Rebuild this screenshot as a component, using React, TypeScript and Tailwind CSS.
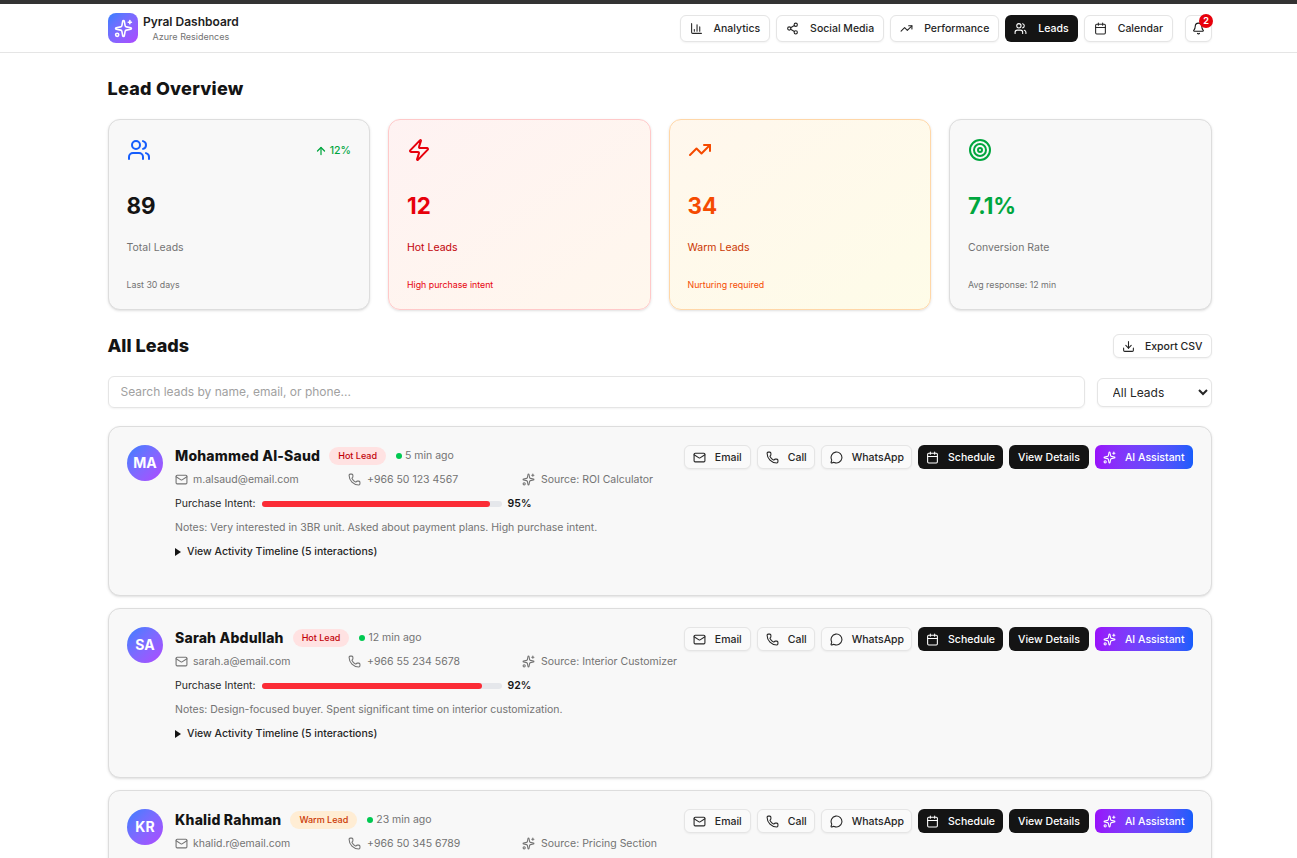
import { ArrowUp, Bell, Calendar, ChartColumn, Download, Mail, MessageCircle, Phone, Share2, Sparkles, Target, TrendingUp, Users, Zap } from 'lucide-react';

const navItems = [
    { label: 'Analytics', icon: ChartColumn },
    { label: 'Social Media', icon: Share2 },
    { label: 'Performance', icon: TrendingUp },
    { label: 'Leads', icon: Users, active: true },
    { label: 'Calendar', icon: Calendar },
];

const leads = [
    {
        initials: 'MA',
        name: 'Mohammed Al-Saud',
        badge: 'Hot Lead',
        hot: true,
        time: '5 min ago',
        email: 'm.alsaud@email.com',
        phone: '+966 50 123 4567',
        source: 'ROI Calculator',
        intent: 95,
        notes: 'Very interested in 3BR unit. Asked about payment plans. High purchase intent.',
    },
    {
        initials: 'SA',
        name: 'Sarah Abdullah',
        badge: 'Hot Lead',
        hot: true,
        time: '12 min ago',
        email: 'sarah.a@email.com',
        phone: '+966 55 234 5678',
        source: 'Interior Customizer',
        intent: 92,
        notes: 'Design-focused buyer. Spent significant time on interior customization.',
    },
    {
        initials: 'KR',
        name: 'Khalid Rahman',
        badge: 'Warm Lead',
        hot: false,
        time: '23 min ago',
        email: 'khalid.r@email.com',
        phone: '+966 50 345 6789',
        source: 'Pricing Section',
        intent: 78,
        notes: 'Comparing options. Requested pricing details for 2BR units.',
    },
];

const headingFont = 'font-["Inter",sans-serif] font-extrabold';

function LeadCard({ lead }: { lead: (typeof leads)[number] }) {
    return (
        <div className="h-[170px] shrink-0 rounded-xl border border-[#dddddd] bg-[#f8f8f8] pt-[18px] pr-[18px] pl-[18.5px] shadow-sm">
            <div className="flex justify-between">
                <div className="flex gap-3">
                    <div className="flex size-9 shrink-0 items-center justify-center rounded-full bg-gradient-to-br from-blue-500 to-purple-500 text-sm font-bold text-white">
                        {lead.initials}
                    </div>
                    <div className="whitespace-nowrap">
                        <div className="mt-px flex h-5 items-center">
                            <span className={`pb-[2px] text-[14px] tracking-[0.2px] text-[#141414] ${headingFont}`}>{lead.name}</span>
                            <span className={`ml-[9px] rounded-full px-[9px] py-[3px] text-[9px] leading-3 font-medium ${lead.hot ? 'bg-red-100 text-red-700' : 'bg-orange-100 text-orange-700'}`}>
                                {lead.badge}
                            </span>
                            <span className="ml-[10px] size-1.5 rounded-full bg-green-500" />
                            <span className="ml-[3px] text-[10.5px] text-neutral-500">{lead.time}</span>
                        </div>
                        <div className="mt-1 flex h-[19px] items-center text-[10.5px] text-neutral-500">
                            <div className="flex w-[173px] items-center gap-[5px]">
                                <Mail size={13} />
                                {lead.email}
                            </div>
                            <div className="flex w-[174px] items-center gap-[6px]">
                                <Phone size={13} />
                                {lead.phone}
                            </div>
                            <div className="flex items-center gap-[6px]">
                                <Sparkles size={13} />
                                Source: {lead.source}
                            </div>
                        </div>
                        <div className="mt-[5px] flex h-[19px] items-center text-[10.5px]">
                            <span className="text-neutral-800">Purchase Intent:</span>
                            <div className="ml-[6px] h-1.5 w-[240px] rounded-full bg-gray-200">
                                <div className="h-full rounded-full bg-[#fb2c36]" style={{ width: `${lead.intent}%` }} />
                            </div>
                            <span className="ml-[6px] font-semibold text-[#141414]">{lead.intent}%</span>
                        </div>
                        <div className="mt-[5px] flex h-[19px] items-center text-[10.5px] text-neutral-500">Notes: {lead.notes}</div>
                        <div className="mt-[5px] flex h-[19px] items-center text-[10.5px] font-medium text-neutral-800">
                            <span className="mr-[6px] size-0 border-y-4 border-l-[6px] border-y-transparent border-l-[#141414]" />
                            View Activity Timeline (5 interactions)
                        </div>
                    </div>
                </div>
                <div className="flex h-6 shrink-0 gap-[6px] text-[10.5px] leading-4 font-medium whitespace-nowrap">
                    <button className="flex items-center gap-[9px] rounded-md border border-neutral-200 bg-[#fafafa] pt-px pr-2 pl-2 text-neutral-800 shadow-xs">
                        <Mail size={13} />
                        Email
                    </button>
                    <button className="flex items-center gap-[9px] rounded-md border border-neutral-200 bg-[#fafafa] pt-px pr-[7px] pl-2 text-neutral-800 shadow-xs">
                        <Phone size={13} />
                        Call
                    </button>
                    <button className="flex items-center gap-[9px] rounded-md border border-neutral-200 bg-[#fafafa] pt-px pr-[7px] pl-2 text-neutral-800 shadow-xs">
                        <MessageCircle size={13} />
                        WhatsApp
                    </button>
                    <button className="flex items-center gap-[9px] rounded-md bg-[#141414] pt-px pr-2 pl-2 text-white">
                        <Calendar size={13} />
                        Schedule
                    </button>
                    <button className="flex items-center rounded-md bg-[#141414] px-[9px] pt-px text-white">View Details</button>
                    <button className="flex items-center gap-[9px] rounded-md bg-gradient-to-r from-purple-600 to-blue-600 pt-px pr-2 pl-2 text-white">
                        <Sparkles size={13} />
                        AI Assistant
                    </button>
                </div>
            </div>
        </div>
    );
}

export default function App() {
    return (
        <div className="h-screen overflow-hidden bg-white font-['Inter',sans-serif] text-[#141414]">
            <div className="h-1 bg-[#333333]" />
            <header className="h-[49px] border-b border-neutral-200 pr-[85px] pl-[108px]">
                <div className="flex h-full items-center justify-between">
                    <div className="flex items-center gap-[5px]">
                        <div className="flex size-[30px] items-center justify-center rounded-lg bg-gradient-to-br from-blue-500 to-purple-500 text-white">
                            <Sparkles size={19} />
                        </div>
                        <div className="text-center">
                            <div className="text-xs leading-4 font-semibold text-[#222222]">Pyral Dashboard</div>
                            <div className="mt-px text-[9px] leading-3 text-neutral-500">Azure Residences</div>
                        </div>
                    </div>
                    <div className="flex items-center">
                        <nav className="flex gap-[6px]">
                            {navItems.map((item) => (
                                <button
                                    key={item.label}
                                    className={`flex h-[27px] items-center gap-[11px] rounded-md px-[9px] pt-px text-[10.5px] leading-4 font-medium ${item.active ? 'bg-[#141414] text-white' : 'border border-neutral-200 bg-white text-neutral-800 shadow-xs'}`}
                                >
                                    <item.icon size={13} />
                                    {item.label}
                                </button>
                            ))}
                        </nav>
                        <button className="relative ml-3 flex h-[27px] w-[27px] items-center justify-center rounded-md border border-neutral-200 bg-white shadow-xs">
                            <Bell size={13} />
                            <span className="absolute -top-[2px] -right-[2px] flex size-[14px] items-center justify-center rounded-full bg-red-600 text-[9px] font-bold text-white">2</span>
                        </button>
                    </div>
                </div>
            </header>
            <main className="pr-[85.5px] pl-[107.5px]">
                <h1 className={`mt-[24px] text-lg leading-[24px] tracking-[0.25px] ${headingFont}`}>Lead Overview</h1>
                <div className="mt-[18px] grid grid-cols-4 gap-[18px]">
                    <div className="h-[191px] rounded-xl border border-[#dddddd] bg-[#f8f8f8] px-[18px] pt-[18px] shadow-sm">
                        <div className="flex items-center justify-between">
                            <Users size={24} className="text-blue-600" />
                            <span className="flex items-center gap-[3px] pt-px text-[10.5px] leading-4 font-medium text-green-600">
                                <ArrowUp size={12} strokeWidth={2.5} />
                                12%
                            </span>
                        </div>
                        <div className="mt-[28px] text-[22.4px] leading-8 font-bold text-[#141414]">89</div>
                        <div className="mt-[18px] text-[10.5px] leading-4 text-neutral-500">Total Leads</div>
                        <div className="mt-[21px] text-[8.8px] leading-4 text-neutral-500">Last 30 days</div>
                    </div>
                    <div className="h-[191px] rounded-xl border border-red-200 bg-gradient-to-br from-red-50 to-orange-50 px-[18px] pt-[18px] shadow-sm">
                        <Zap size={24} className="text-red-600" />
                        <div className="mt-[28px] text-[22.4px] leading-8 font-bold text-red-600">12</div>
                        <div className="mt-[18px] text-[10.5px] leading-4 text-red-700">Hot Leads</div>
                        <div className="mt-[21px] text-[8.8px] leading-4 text-red-600">High purchase intent</div>
                    </div>
                    <div className="h-[191px] rounded-xl border border-orange-200 bg-gradient-to-br from-orange-50 to-yellow-50 px-[18px] pt-[18px] shadow-sm">
                        <TrendingUp size={24} className="text-orange-600" />
                        <div className="mt-[28px] text-[22.4px] leading-8 font-bold text-orange-600">34</div>
                        <div className="mt-[18px] text-[10.5px] leading-4 text-orange-700">Warm Leads</div>
                        <div className="mt-[21px] text-[8.8px] leading-4 text-orange-600">Nurturing required</div>
                    </div>
                    <div className="h-[191px] rounded-xl border border-[#dddddd] bg-[#f8f8f8] px-[18px] pt-[18px] shadow-sm">
                        <Target size={24} className="text-green-600" />
                        <div className="mt-[28px] text-[22.4px] leading-8 font-bold text-green-600">7.1%</div>
                        <div className="mt-[18px] text-[10.5px] leading-4 text-neutral-500">Conversion Rate</div>
                        <div className="mt-[21px] text-[8.8px] leading-4 text-neutral-500">Avg response: 12 min</div>
                    </div>
                </div>
                <div className="mt-6 flex h-6 items-center justify-between">
                    <h2 className={`text-lg ${headingFont}`}>All Leads</h2>
                    <button className="flex h-6 items-center gap-[10px] rounded-md border border-neutral-200 bg-white px-2 pt-px text-[10.5px] leading-4 font-medium text-neutral-800 shadow-xs">
                        <Download size={13} />
                        Export CSV
                    </button>
                </div>
                <div className="mt-[18px] flex items-center gap-3">
                    <input
                        placeholder="Search leads by name, email, or phone..."
                        className="h-8 flex-1 rounded-md border border-neutral-200 px-3 pb-[2px] text-xs shadow-xs placeholder:text-neutral-400"
                    />
                    <select className="h-[29px] w-[115px] rounded-md border border-neutral-200 bg-white px-[11px] text-xs text-neutral-800 shadow-xs">
                        <option>All Leads</option>
                    </select>
                </div>
                <div className="mt-[18px] flex flex-col gap-3">
                    {leads.map((lead) => (
                        <LeadCard key={lead.initials} lead={lead} />
                    ))}
                </div>
            </main>
        </div>
    );
}
